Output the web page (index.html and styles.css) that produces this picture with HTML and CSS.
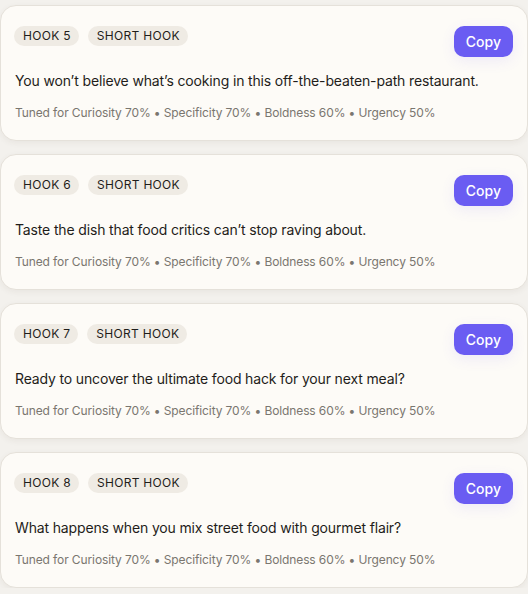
FILE: index.html
```html
<!DOCTYPE html>
<html lang="en">
<head>
<meta charset="utf-8">
<title>Hooks</title>
<link rel="stylesheet" href="styles.css">
</head>
<body>
<div class="list">
  <div class="card">
    <div class="card-head">
      <div class="tags"><span class="tag">HOOK 5</span><span class="tag">SHORT HOOK</span></div>
      <button class="copy">Copy</button>
    </div>
    <p class="hook">You won’t believe what’s cooking in this off-the-beaten-path restaurant.</p>
    <p class="meta">Tuned for Curiosity 70% • Specificity 70% • Boldness 60% • Urgency 50%</p>
  </div>
  <div class="card">
    <div class="card-head">
      <div class="tags"><span class="tag">HOOK 6</span><span class="tag">SHORT HOOK</span></div>
      <button class="copy">Copy</button>
    </div>
    <p class="hook">Taste the dish that food critics can’t stop raving about.</p>
    <p class="meta">Tuned for Curiosity 70% • Specificity 70% • Boldness 60% • Urgency 50%</p>
  </div>
  <div class="card">
    <div class="card-head">
      <div class="tags"><span class="tag">HOOK 7</span><span class="tag">SHORT HOOK</span></div>
      <button class="copy">Copy</button>
    </div>
    <p class="hook">Ready to uncover the ultimate food hack for your next meal?</p>
    <p class="meta">Tuned for Curiosity 70% • Specificity 70% • Boldness 60% • Urgency 50%</p>
  </div>
  <div class="card">
    <div class="card-head">
      <div class="tags"><span class="tag">HOOK 8</span><span class="tag">SHORT HOOK</span></div>
      <button class="copy">Copy</button>
    </div>
    <p class="hook">What happens when you mix street food with gourmet flair?</p>
    <p class="meta">Tuned for Curiosity 70% • Specificity 70% • Boldness 60% • Urgency 50%</p>
  </div>
</div>
</body>
</html>
```
FILE: styles.css
```css
* { box-sizing: border-box; }
html, body {
  margin: 0;
  padding: 0;
  background: #f3f1ed;
  font-family: Inter, "Noto Sans", sans-serif;
}
.list {
  display: flex;
  flex-direction: column;
  gap: 13px;
  padding-top: 5px;
}
.card {
  background: #fdfbf7;
  border: 1px solid #e5e1da;
  border-radius: 16px;
  padding: 20px 15px 19px 13px;
  box-shadow: 0 2px 6px rgba(60, 50, 30, 0.06);
  height: 136px;
}
.card-head {
  display: flex;
  justify-content: space-between;
  align-items: flex-start;
  height: 31px;
}
.tags {
  display: flex;
  gap: 9px;
}
.tag {
  display: inline-block;
  background: #efebe4;
  color: #1f1d1a;
  font-size: 12px;
  line-height: 20px;
  height: 20px;
  padding: 0 8px 0 9px;
  border-radius: 10px;
  letter-spacing: 0.3px;
}
.copy {
  font-family: inherit;
  font-size: 14px;
  font-weight: 500;
  color: #fff;
  background: #6a5cf2;
  border: none;
  border-radius: 10px;
  height: 31px;
  padding: 0 12px;
  margin-right: -1px;
  box-shadow: 0 4px 14px rgba(106, 92, 242, 0.10);
}
.hook {
  margin: 14px 0 0 1px;
  font-size: 14px;
  line-height: 20px;
  color: #1f1d1a;
  letter-spacing: -0.15px;
}
.meta {
  margin: 13px 0 0 1px;
  font-size: 12px;
  line-height: 18px;
  color: #7a766f;
  letter-spacing: -0.11px;
}
```
